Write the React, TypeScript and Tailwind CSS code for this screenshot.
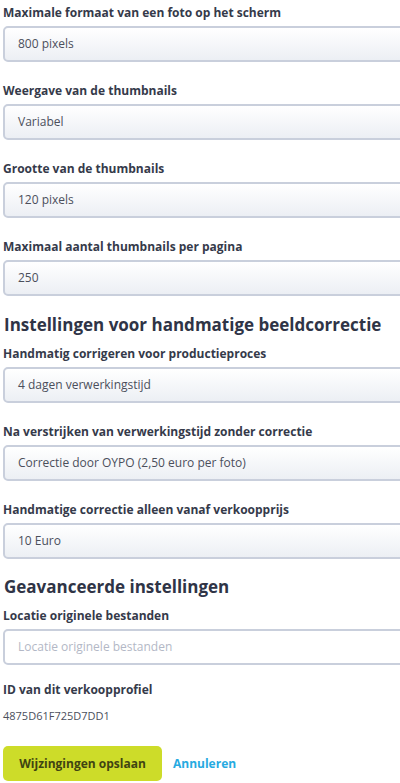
const fields1 = [
  { label: "Maximale formaat van een foto op het scherm", value: "800 pixels" },
  { label: "Weergave van de thumbnails", value: "Variabel" },
  { label: "Grootte van de thumbnails", value: "120 pixels" },
  { label: "Maximaal aantal thumbnails per pagina", value: "250" },
];

const fields2 = [
  { label: "Handmatig corrigeren voor productieproces", value: "4 dagen verwerkingstijd" },
  { label: "Na verstrijken van verwerkingstijd zonder correctie", value: "Correctie door OYPO (2,50 euro per foto)" },
  { label: "Handmatige correctie alleen vanaf verkoopprijs", value: "10 Euro" },
];

function Field({ label, value, placeholder }: { label: string; value?: string; placeholder?: string }) {
  return (
    <div className="flex flex-col">
      <label className="h-[26px] whitespace-nowrap pl-[3px] pt-[4px] text-[12px] font-bold leading-[18px] text-[#353a4a]">
        {label}
      </label>
      {placeholder ? (
        <div className="ml-[3px] flex h-[36px] w-[420px] items-center rounded-[5px] border-2 border-[#c9cfdc] bg-white pl-[13px] text-[12px] text-[#b3b8c6]">
          {placeholder}
        </div>
      ) : (
        <div className="ml-[3px] flex h-[36px] w-[420px] items-center rounded-[5px] border-2 border-[#c9cfdc] bg-gradient-to-b from-white to-[#eceff4] pl-[13px] text-[12px] text-[#4b4f5c]">
          {value}
        </div>
      )}
    </div>
  );
}

export default function App() {
  return (
    <div className="h-[783px] w-[400px] overflow-hidden bg-white font-['Open_Sans',sans-serif]">
      <div className="flex flex-col gap-[16px]">
        {fields1.map((f) => (
          <Field key={f.label} {...f} />
        ))}
      </div>
      <h2 className="mb-[4px] mt-[17px] whitespace-nowrap pl-[4px] text-[17px] font-bold leading-[24px] text-[#2f3446]">
        Instellingen voor handmatige beeldcorrectie
      </h2>
      <div className="flex flex-col gap-[16px]">
        {fields2.map((f) => (
          <Field key={f.label} {...f} />
        ))}
      </div>
      <h2 className="mb-[4px] mt-[16px] whitespace-nowrap pl-[4px] text-[17px] font-bold leading-[24px] text-[#2f3446]">
        Geavanceerde instellingen
      </h2>
      <Field label="Locatie originele bestanden" placeholder="Locatie originele bestanden" />
      <div className="mt-[16px] pl-[3px] text-[12px] font-bold leading-[18px] text-[#353a4a]">ID van dit verkoopprofiel</div>
      <div className="mt-[9px] pl-[3px] text-[11px] leading-[16px] text-[#4b4f5c]">4875D61F725D7DD1</div>
      <div className="mt-[22px] flex items-center gap-[11px] pl-[3px]">
        <button className="h-[35px] w-[159px] rounded-[5px] bg-[#cddc29] text-[12px] font-bold text-[#3f4412]">
          Wijzingingen opslaan
        </button>
        <button className="text-[12px] font-bold text-[#27aae1]">Annuleren</button>
      </div>
    </div>
  );
}
